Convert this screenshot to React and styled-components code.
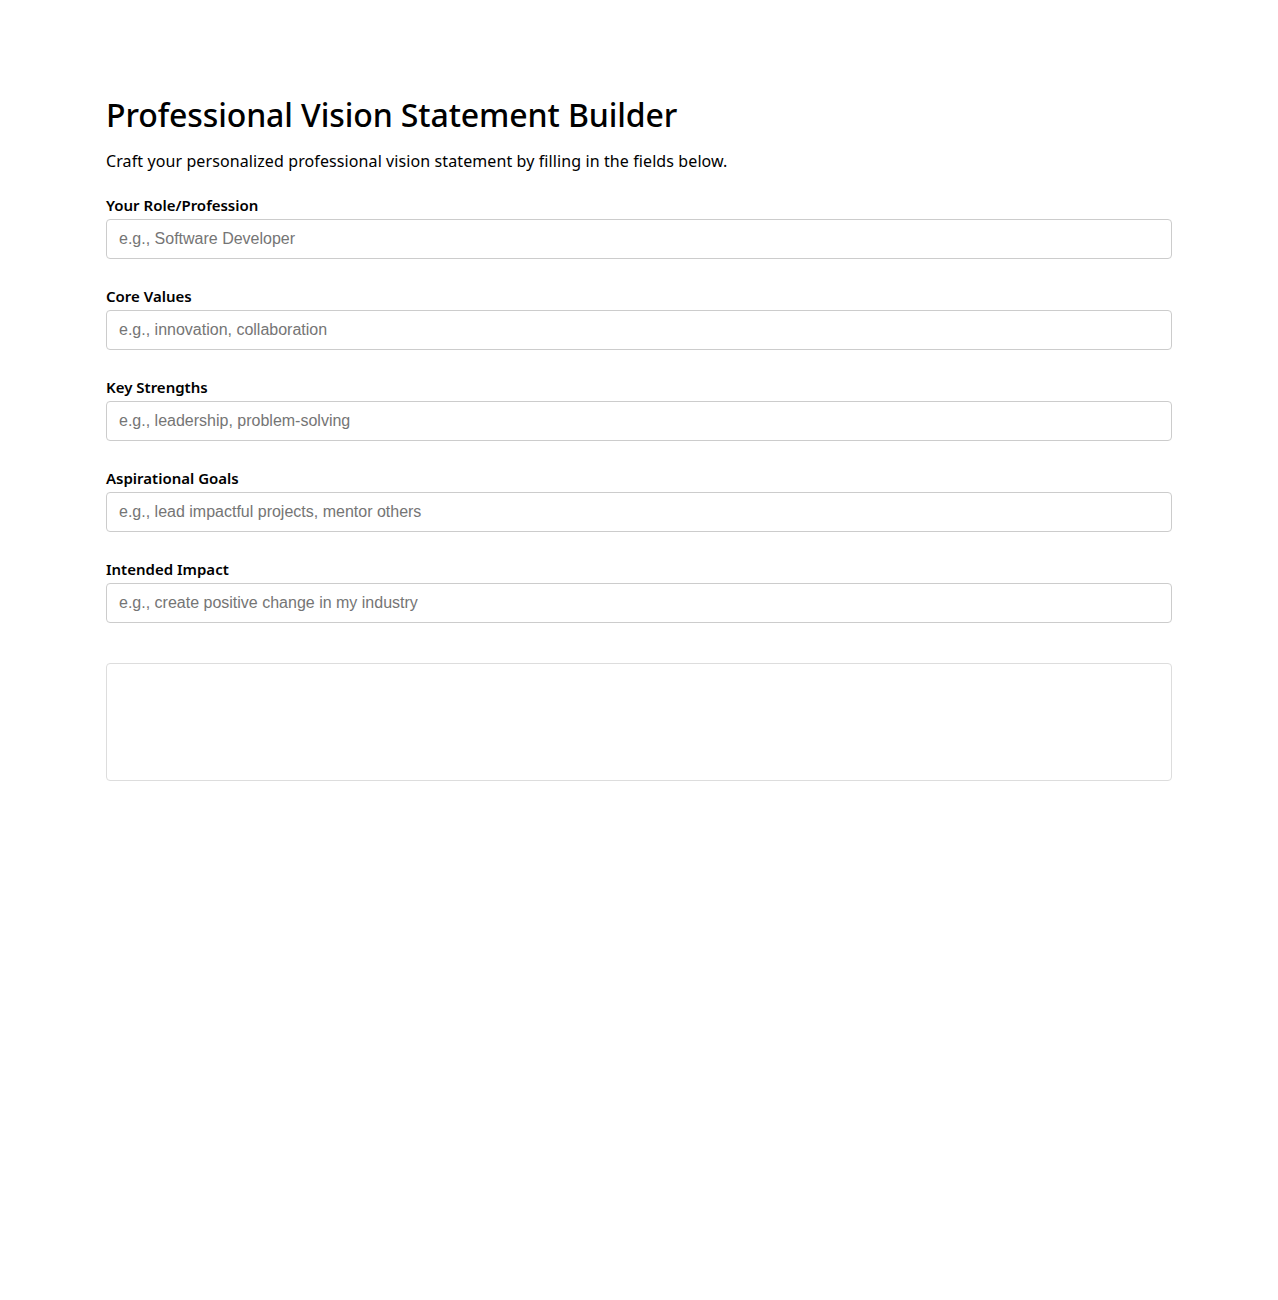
import React, { useState } from "react";
import styled, { createGlobalStyle } from "styled-components";

//////////// STYLED COMPONENTS /////////////
const GlobalStyle = createGlobalStyle`
  body {
    margin: 0;
    background: #ffffff;
    color: #000000;
    font-family: "Noto Sans", "Open Sans", sans-serif;
  }
`;

const Page = styled.main`
  max-width: 1066px;
  margin: 0 auto;
  padding: 92px 0 40px;
`;

const Title = styled.h1`
  margin: 0 0 11px;
  font-size: 32px;
  font-weight: 500;
  line-height: 46px;
  letter-spacing: -0.1px;
`;

const Intro = styled.p`
  margin: 0 0 22px;
  font-size: 16px;
  line-height: 24px;
  letter-spacing: 0.1px;
`;

const Field = styled.div`
  display: flex;
  flex-direction: column;
  margin-bottom: 27px;
`;

const Label = styled.label`
  font-size: 15px;
  font-weight: 600;
  line-height: 20px;
  margin-bottom: 4px;
`;

const Input = styled.input`
  box-sizing: border-box;
  width: 100%;
  height: 40px;
  padding: 0 12px;
  border: 1px solid #cccccc;
  border-radius: 4px;
  font-family: "Liberation Sans", Arial, sans-serif;
  font-size: 16px;
  color: #222222;
  outline: none;
  &::placeholder {
    color: #757575;
  }
`;

const Output = styled.div`
  box-sizing: border-box;
  min-height: 118px;
  margin-top: 40px;
  padding: 16px;
  border: 1px solid #dddddd;
  border-radius: 4px;
  font-size: 16px;
  line-height: 1.5;
`;
//////////// END STYLED COMPONENTS /////////////

const fields = [
  { key: "role", label: "Your Role/Profession", hint: "e.g., Software Developer" },
  { key: "values", label: "Core Values", hint: "e.g., innovation, collaboration" },
  { key: "strengths", label: "Key Strengths", hint: "e.g., leadership, problem-solving" },
  { key: "goals", label: "Aspirational Goals", hint: "e.g., lead impactful projects, mentor others" },
  { key: "impact", label: "Intended Impact", hint: "e.g., create positive change in my industry" },
];

//////////// REACT COMPONENT /////////////
export default function App() {
  const [form, setForm] = useState({});

  const update = (e) => setForm({ ...form, [e.target.name]: e.target.value });

  const ready = fields.every((f) => form[f.key]);

  return (
    <Page>
      <GlobalStyle />
      <Title>Professional Vision Statement Builder</Title>
      <Intro>
        Craft your personalized professional vision statement by filling in the
        fields below.
      </Intro>
      {fields.map((f) => (
        <Field key={f.key}>
          <Label htmlFor={f.key}>{f.label}</Label>
          <Input
            id={f.key}
            name={f.key}
            placeholder={f.hint}
            value={form[f.key] || ""}
            onChange={update}
          />
        </Field>
      ))}
      <Output>
        {ready &&
          `As a ${form.role}, I am guided by ${form.values}. Drawing on my ${form.strengths}, I aim to ${form.goals} and ${form.impact}.`}
      </Output>
    </Page>
  );
}
//////////// END REACT COMPONENT /////////////
